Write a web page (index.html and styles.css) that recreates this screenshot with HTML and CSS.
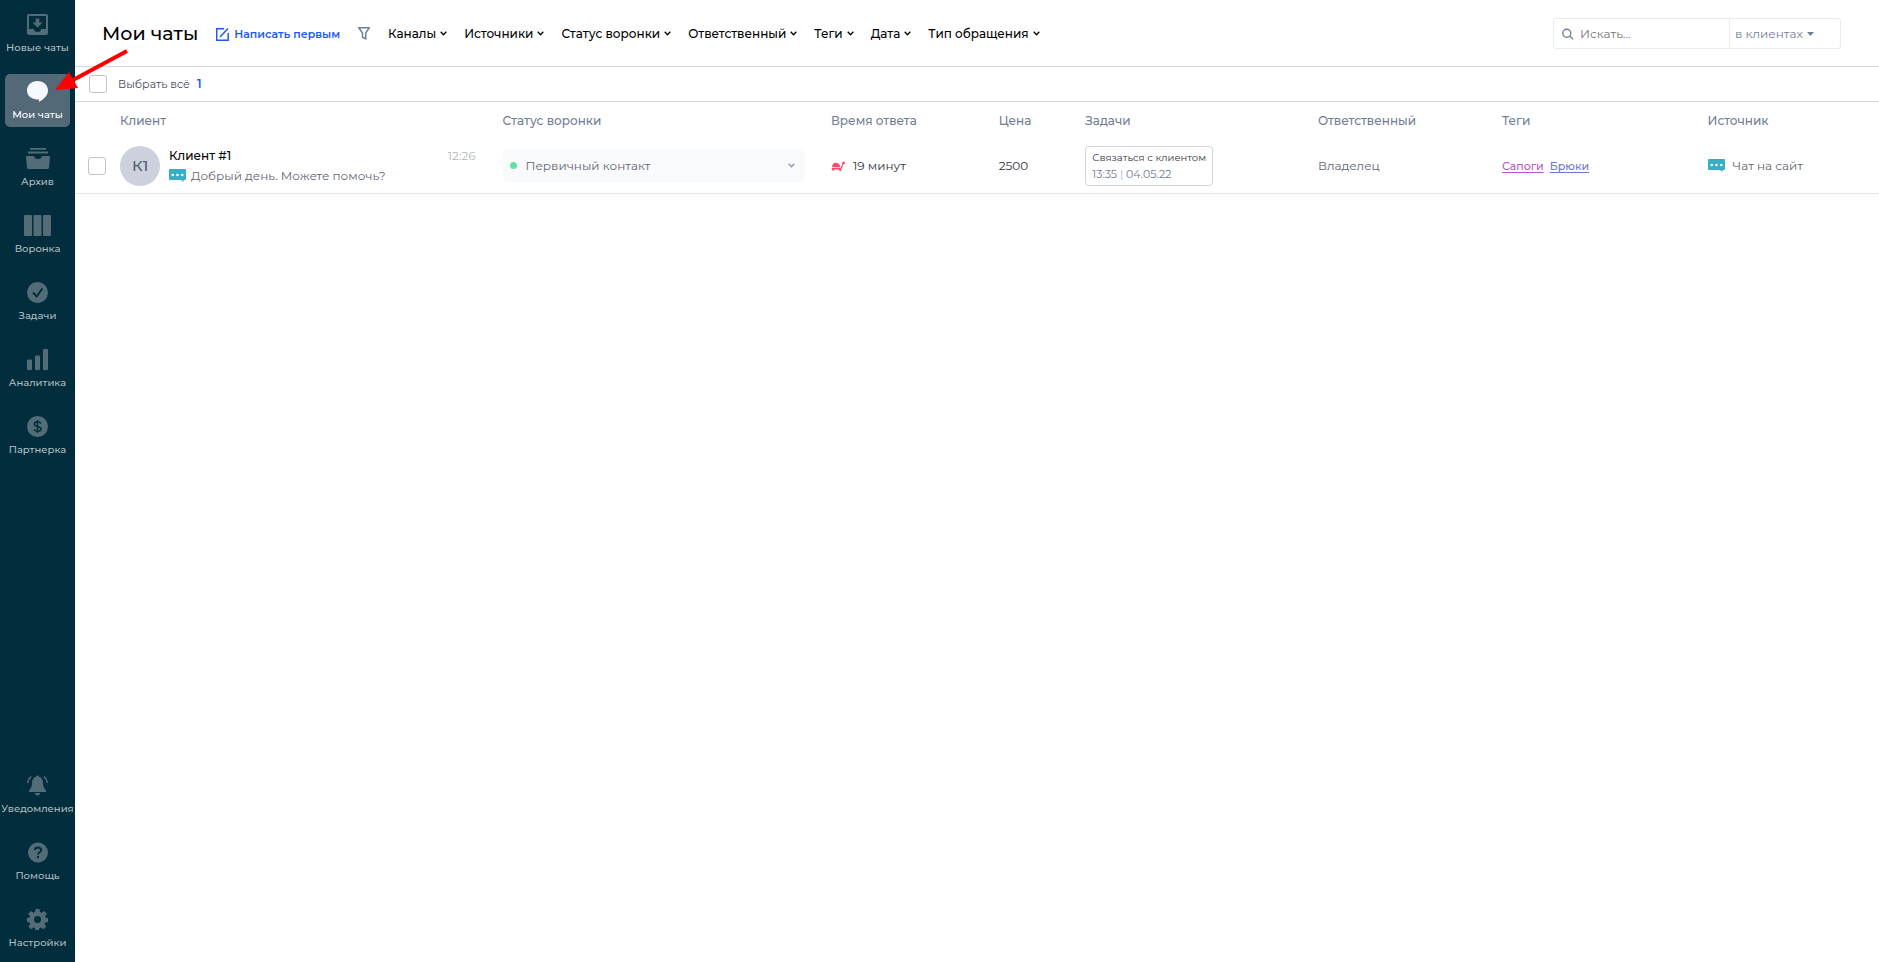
FILE: index.html
```html
<!DOCTYPE html>
<html lang="ru">
<head>
<meta charset="utf-8">
<title>Мои чаты</title>
<link rel="stylesheet" href="styles.css">
</head>
<body>
<div class="app">
  <nav class="sidebar">
    <div class="nav-group">
      <a class="nav-item" href="#"><svg class="nav-icon" viewBox="0 0 21 21"><path fill-rule="evenodd" d="M2 0h17a2 2 0 0 1 2 2v17a2 2 0 0 1-2 2H2a2 2 0 0 1-2-2V2a2 2 0 0 1 2-2zM2 2v13h5a3.500 3 0 0 0 7 0h5V2z"/><path d="M8.700 4.500h3.600v4h3.200l-5 5-5-5h3.200z"/></svg>Новые чаты</a>
      <a class="nav-item active" href="#"><svg class="nav-icon" viewBox="0 0 21 21"><path d="M10.500 0C16.500 0 21 4 21 9.500c0 5-4 8.500-9 11.500v-2.500C5 19 0 15 0 9.500 0 4 4.500 0 10.500 0z"/></svg>Мои чаты</a>
      <a class="nav-item" href="#"><svg class="nav-icon wide" viewBox="0 0 24 21"><path d="M4 0h16v1.800H4zM2 3.600h20v2H2zM0 8h8q.5 3 4 3t4-3h8l-1 11.500q-.2 1.500-1.500 1.500h-19Q1.200 21 1 19.500z"/></svg>Архив</a>
      <a class="nav-item" href="#"><svg class="nav-icon wider" viewBox="0 0 27 21"><rect width="8" height="21" rx="1"/><rect x="9.500" width="8" height="21" rx="1"/><rect x="19" width="8" height="21" rx="1"/></svg>Воронка</a>
      <a class="nav-item" href="#"><svg class="nav-icon" viewBox="0 0 21 21"><circle cx="10.500" cy="10.500" r="10.500"/><path class="cut" d="M6 10.500l3.700 4L15.300 6.500"/></svg>Задачи</a>
      <a class="nav-item" href="#"><svg class="nav-icon" viewBox="0 0 21 21"><rect y="10.500" width="5" height="10.500" rx="1"/><rect x="8" y="6.500" width="5" height="14.500" rx="1"/><rect x="16" width="5" height="21" rx="1"/></svg>Аналитика</a>
      <a class="nav-item" href="#"><svg class="nav-icon" viewBox="0 0 21 21"><circle cx="10.500" cy="10.500" r="10.500"/><path class="cut thin" d="M14 7.500Q13 5.800 10.500 5.800 7.300 5.800 7.300 8.100 7.300 10 10.500 10.400 14 10.900 14 13 14 15.300 10.500 15.300 7.800 15.300 7 13.300M10.500 4v13"/></svg>Партнерка</a>
    </div>
    <div class="nav-group">
      <a class="nav-item" href="#"><svg class="nav-icon" viewBox="0 0 21 21"><path d="M10.500.500q1.300 0 1.500 1.300 4 1.200 4 6.200 0 5 3 7.500V17H2v-1.500Q5 13 5 8q0-5 4-6.200.2-1.300 1.500-1.300zM7.500 18h6q-1 2.500-3 2.500t-3-2.500z"/><path class="line" d="M4.200 1.500Q1 4 .8 8M16.800 1.500Q20 4 20.200 8"/></svg>Уведомления</a>
      <a class="nav-item" href="#"><svg class="nav-icon" viewBox="0 0 21 21"><circle cx="11" cy="10.500" r="10"/><path class="cut" d="M7.800 8Q8 5.500 11 5.500t3.200 2.600q0 1.400-1.700 2.200Q11 11 11 12.500M11 14v2.300"/></svg>Помощь</a>
      <a class="nav-item" href="#"><svg class="nav-icon" viewBox="0 0 21 21"><path fill-rule="evenodd" d="M8.500 0h4l.5 3 1.700.7L17.200 2 20 4.800l-2 2.500.6 1.500L21 9v4l-3 .5-.6 1.500 1.800 2.500-2.700 2.700-2.500-1.800-1.500.6-.5 2h-4L8 19l-1.500-.6L4 20.200l-2.700-2.700L3.100 15l-.6-1.500L0 13V9l2.500-.4L3 7.200 1.200 4.700 4 2l2.400 1.700L8 3zM10.500 7a3.500 3.500 0 1 0 0 7 3.500 3.500 0 0 0 0-7z"/></svg>Настройки</a>
    </div>
  </nav>

  <main class="main">
    <header class="topbar">
      <h1 class="title">Мои чаты</h1>
      <button class="write" type="button"><svg width="13" height="14" viewBox="0 0 13 14"><path d="M8 1.700H.700v11.500h11.500V6M4 10L12 1.500"/></svg>Написать первым</button>
      <button class="funnel" type="button" aria-label="Фильтр"><svg width="12" height="13" viewBox="0 0 12 13"><path d="M.8.800h10.400L7.700 6v5.800l-3.200-1.500V6z"/></svg></button>
      <div class="filters">
        <button class="filter" type="button">Каналы<svg class="chev" viewBox="0 0 7 5"><path d="M.7.700l2.800 3L6.300.700"/></svg></button>
        <button class="filter" type="button">Источники<svg class="chev" viewBox="0 0 7 5"><path d="M.7.700l2.800 3L6.300.700"/></svg></button>
        <button class="filter" type="button">Статус воронки<svg class="chev" viewBox="0 0 7 5"><path d="M.7.700l2.800 3L6.300.700"/></svg></button>
        <button class="filter" type="button">Ответственный<svg class="chev" viewBox="0 0 7 5"><path d="M.7.700l2.800 3L6.300.700"/></svg></button>
        <button class="filter" type="button">Теги<svg class="chev" viewBox="0 0 7 5"><path d="M.7.700l2.800 3L6.300.700"/></svg></button>
        <button class="filter" type="button">Дата<svg class="chev" viewBox="0 0 7 5"><path d="M.7.700l2.800 3L6.300.700"/></svg></button>
        <button class="filter" type="button">Тип обращения<svg class="chev" viewBox="0 0 7 5"><path d="M.7.700l2.800 3L6.300.700"/></svg></button>
      </div>
      <form class="search">
        <svg class="lens" width="12" height="12" viewBox="0 0 12 12"><circle cx="4.800" cy="5.300" r="4"/><path d="M7.800 8.300l3.400 3"/></svg>
        <input class="search-input" type="text" placeholder="Искать..." aria-label="Искать">
        <div class="scope">
          <select class="scope-select" aria-label="Где искать"><option>в клиентах</option></select>
          <svg class="caret" width="7" height="4" viewBox="0 0 7 4"><path d="M0 0h7L3.500 4z"/></svg>
        </div>
      </form>
    </header>

    <div class="selectbar">
      <label class="pick"><input class="box" type="checkbox">Выбрать всё</label>
      <span class="count">1</span>
    </div>

    <table class="chats">
      <colgroup><col class="c-check"><col class="c-client"><col class="c-status"><col class="c-time"><col class="c-price"><col class="c-task"><col class="c-owner"><col class="c-tags"><col class="c-source"></colgroup>
      <thead>
        <tr><td></td><th>Клиент</th><th>Статус воронки</th><th>Время ответа</th><th>Цена</th><th>Задачи</th><th>Ответственный</th><th>Теги</th><th>Источник</th></tr>
      </thead>
      <tbody>
        <tr>
          <td class="check-cell"><input class="box" type="checkbox" aria-label="Клиент #1"></td>
          <td>
            <div class="client">
              <div class="avatar">К1</div>
              <div class="client-info">
                <div class="client-top"><span class="client-name">Клиент #1</span><time class="client-time">12:26</time></div>
                <div class="client-msg"><svg class="chat" viewBox="0 0 17 13"><path d="M1 0h15q1 0 1 1v9q0 1-1 1h-1.500v2l-2.500-2H1q-1 0-1-1V1q0-1 1-1z"/><g class="dots"><circle cx="3.700" cy="6" r="1.300"/><circle cx="8.500" cy="6" r="1.300"/><circle cx="13.300" cy="6" r="1.300"/></g></svg>Добрый день. Можете помочь?</div>
              </div>
            </div>
          </td>
          <td>
            <div class="status">
              <span class="dot"></span>
              <select class="status-select" aria-label="Статус воронки"><option>Первичный контакт</option></select>
              <svg class="chev pale" viewBox="0 0 7 5"><path d="M.7.700l2.800 3L6.300.700"/></svg>
            </div>
          </td>
          <td class="dark"><div class="with-icon"><svg class="turtle" width="14" height="10" viewBox="0 0 14 10"><path d="M1 6.300Q1.200 1.800 4.800 1.800q3.800 0 4.600 4.500zM0 7h9.500l1.800-3.500Q10.800.500 12.500.500 14 .700 14 2q-.2 1.300-1.600 1.500L11.300 6.500 10.300 8v2H8.700L7.500 8.500H3.800L3 9.600H.8L1.300 8z"/></svg>19 минут</div></td>
          <td class="dark">2500</td>
          <td><div class="task"><div class="task-name">Связаться с клиентом</div><div class="task-date">13:35 <span class="bar">|</span> 04.05.22</div></div></td>
          <td>Владелец</td>
          <td><div class="tags"><a class="tag pink" href="#">Сапоги</a><a class="tag blue" href="#">Брюки</a></div></td>
          <td><div class="with-icon"><svg class="chat" viewBox="0 0 17 13"><path d="M1 0h15q1 0 1 1v9q0 1-1 1h-1.500v2l-2.500-2H1q-1 0-1-1V1q0-1 1-1z"/><g class="dots"><circle cx="3.700" cy="6" r="1.300"/><circle cx="8.500" cy="6" r="1.300"/><circle cx="13.300" cy="6" r="1.300"/></g></svg>Чат на сайт</div></td>
        </tr>
      </tbody>
    </table>
  </main>
  <svg class="pointer" width="74" height="42" viewBox="0 0 74 42"><path d="M72 2L18 31" stroke="#f00" stroke-width="4"/><path d="M0 41L14 23 23 39z" fill="#f00"/></svg>
</div>
</body>
</html>
```
FILE: styles.css
```css
* { box-sizing: border-box; }
body {
  margin: 0;
  background: #fff;
  color: #5f6672;
  font: 12px/16px Montserrat, Inter, sans-serif;
}
button, input, select { font: inherit; color: inherit; margin: 0; }
button { padding: 0; border: 0; background: none; cursor: pointer; }
select { appearance: none; border: 0; padding: 0; background: none; outline: 0; }
svg { flex: none; }

.app { position: relative; display: flex; min-height: 100vh; }

.sidebar {
  flex: none;
  width: 75px;
  padding: 7px 5px;
  background: #022d3c;
  display: flex;
  flex-direction: column;
  justify-content: space-between;
}
.nav-group { display: flex; flex-direction: column; gap: 14px; }
.nav-item {
  height: 53px;
  padding-top: 7px;
  border-radius: 5px;
  display: flex;
  flex-direction: column;
  align-items: center;
  gap: 7px;
  color: #b1bfc4;
  font-size: 10px;
  line-height: 12px;
  font-weight: 500;
  white-space: nowrap;
  text-decoration: none;
}
.nav-item.active { background: #536977; color: #fff; }
.nav-icon { width: 21px; height: 21px; fill: #536d78; }
.nav-icon.wide { width: 24px; }
.nav-icon.wider { width: 27px; }
.active .nav-icon { fill: #f6f9ff; }
.cut { fill: none; stroke: #022d3c; stroke-width: 2; }
.cut.thin { stroke-width: 1.5; }
.line { fill: none; stroke: #536d78; stroke-width: 1.5; }

.main { flex: 1; min-width: 0; }

.topbar {
  height: 67px;
  padding: 1px 38px 0 27px;
  border-bottom: 1px solid #d5d9e5;
  display: flex;
  align-items: center;
  color: #000;
}
.title { margin: 0 18px 0 0; font-size: 19px; line-height: 26px; font-weight: 500; }
.write { display: flex; align-items: center; gap: 5px; color: #1f5af6; font-size: 11px; font-weight: 600; }
.write svg { fill: none; stroke: #1f5af6; stroke-width: 1.5; }
.funnel { margin: 0 18px; display: flex; }
.funnel svg { fill: none; stroke: #737d95; stroke-width: 1.5; }
.filters { display: flex; gap: 17px; font-weight: 500; }
.filter { display: flex; align-items: center; gap: 4px; white-space: nowrap; }
.chev { width: 7px; height: 5px; fill: none; stroke: #000; stroke-width: 1.3; }

.search {
  margin-left: auto;
  width: 288px;
  height: 31px;
  border: 1px solid #e9ebf0;
  border-radius: 3px;
  display: flex;
  align-items: center;
  color: #737d95;
}
.lens { margin-left: 8px; fill: none; stroke: #737d95; stroke-width: 1.4; }
.search-input { flex: 1; min-width: 0; border: 0; outline: 0; padding: 0 6px; background: none; }
.search-input::placeholder { color: #757575; opacity: 1; }
.scope { width: 111px; height: 100%; padding-left: 5px; border-left: 1px solid #e9ebf0; display: flex; align-items: center; gap: 4px; }
.caret { fill: #737d95; }

.selectbar {
  height: 35px;
  padding-left: 14px;
  border-bottom: 1px solid #d5d9e5;
  display: flex;
  align-items: center;
  gap: 7px;
  color: #444b58;
}
.pick { display: flex; align-items: center; gap: 11px; font-size: 11px; }
.box {
  appearance: none;
  display: block;
  width: 18px;
  height: 18px;
  border: 1px solid #bfc3d3;
  border-radius: 3px;
  background: #fff;
}
.count { color: #1f5af6; font-weight: 600; }

.chats { width: 100%; table-layout: fixed; border-collapse: collapse; border-bottom: 1px solid #e2e4e9; }
.c-check { width: 2.5%; }
.c-client { width: 21.2%; }
.c-status { width: 18.2%; }
.c-time { width: 9.3%; }
.c-price { width: 4.8%; }
.c-task { width: 12.9%; }
.c-owner { width: 10.2%; }
.c-tags { width: 11.4%; }
.c-source { width: 9.5%; }
.chats th { height: 37px; padding: 0; text-align: left; font-weight: 500; color: #737d95; }
.chats td { padding: 0; vertical-align: middle; white-space: nowrap; }
.chats tbody tr { height: 54px; }
.chats .check-cell { padding-left: 13px; }
.chats .dark { color: #30333a; }

.client { display: flex; align-items: center; gap: 9px; padding-right: 27px; }
.avatar {
  width: 40px;
  height: 40px;
  border-radius: 50%;
  background: #cdd1dd;
  color: #515a6e;
  font-size: 15px;
  font-weight: 500;
  display: flex;
  align-items: center;
  justify-content: center;
}
.client-info { flex: 1; display: flex; flex-direction: column; gap: 4px; }
.client-top { display: flex; justify-content: space-between; }
.client-name { color: #000; font-weight: 500; }
.client-time { color: #b3b6bf; }
.client-msg { display: flex; align-items: center; gap: 5px; }
.chat { width: 17px; height: 13px; fill: #37adc7; }
.dots { fill: #fff; }
.turtle { fill: #ff4b6b; }

.status {
  width: 302px;
  max-width: 94%;
  height: 33px;
  padding: 0 10px 0 7px;
  border-radius: 5px;
  background: #f9fafc;
  display: flex;
  align-items: center;
}
.dot { width: 7px; height: 7px; margin-right: 9px; border-radius: 50%; background: #62e2a0; }
.status-select { flex: 1; min-width: 0; }
.chev.pale { stroke: #8f97ad; }
.with-icon { display: flex; align-items: center; gap: 8px; }

.task {
  width: max-content;
  padding: 3px 6px;
  border: 1px solid #d0d5e0;
  border-radius: 4px;
}
.task-name { color: #30333a; font-size: 10px; }
.task-date { color: #737d95; font-size: 11px; }
.bar { color: #8cbcf0; }
.tags { display: flex; gap: 6px; font-size: 11px; font-weight: 500; }
.tag { text-underline-offset: 2px; }
.pink { color: #b35ac6; }
.blue { color: #6b78cf; }

.pointer { position: absolute; left: 55px; top: 49px; fill: none; }
```
